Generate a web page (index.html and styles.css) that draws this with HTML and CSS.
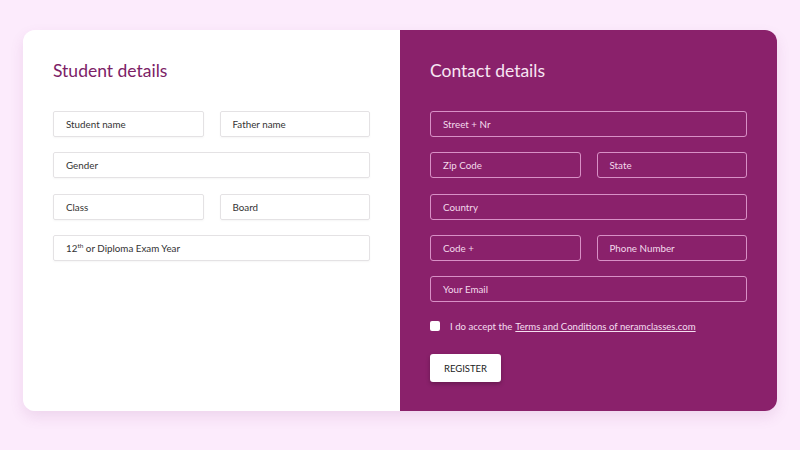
FILE: index.html
```html
<!DOCTYPE html>
<html>
<head>
<meta charset="utf-8">
<link rel="stylesheet" href="styles.css">
</head>
<body>
<div class="card">
  <section class="panel left">
    <h2>Student details</h2>
    <div class="rows">
      <div class="row two">
        <div class="field">Student name</div>
        <div class="field">Father name</div>
      </div>
      <div class="row"><div class="field">Gender</div></div>
      <div class="row two">
        <div class="field">Class</div>
        <div class="field">Board</div>
      </div>
      <div class="row"><div class="field">12<sup>th</sup> or Diploma Exam Year</div></div>
    </div>
  </section>
  <section class="panel right">
    <h2>Contact details</h2>
    <div class="rows">
      <div class="row"><div class="field">Street + Nr</div></div>
      <div class="row two">
        <div class="field">Zip Code</div>
        <div class="field">State</div>
      </div>
      <div class="row"><div class="field">Country</div></div>
      <div class="row two">
        <div class="field">Code +</div>
        <div class="field">Phone Number</div>
      </div>
      <div class="row"><div class="field">Your Email</div></div>
    </div>
    <label class="accept"><span class="box"></span>I do accept the <a href="#">Terms and Conditions of neramclasses.com</a></label>
    <button class="register">REGISTER</button>
  </section>
</div>
</body>
</html>
```
FILE: styles.css
```css
* { box-sizing: border-box; }
html, body { margin: 0; padding: 0; }
body {
  background: #fcebfc;
  font-family: Lato, "Noto Sans", sans-serif;
  width: 800px;
  height: 450px;
  padding: 30px 23px 0 23px;
}
.card {
  display: flex;
  height: 381px;
  border-radius: 12px;
  box-shadow: 0 6px 14px rgba(140, 60, 130, 0.12);
  overflow: hidden;
}
.panel {
  flex: 1;
  padding: 29px 30px 0 30px;
}
.left { background: #ffffff; }
.right { background: #8a216b; }
h2 {
  margin: 0;
  font-weight: 400;
  font-size: 17.5px;
  line-height: 24px;
  height: 52px;
}
.left h2 { color: #7c2166; }
.right h2 { color: #f7e6f3; }
.rows {
  display: flex;
  flex-direction: column;
  gap: 15.3px;
}
.row { display: flex; gap: 16px; }
.row.two .field { flex: 1; }
.field {
  flex: 1;
  height: 26px;
  font-size: 9.8px;
  line-height: 24px;
  padding: 0 12px;
  border-radius: 2px;
}
.left .field {
  border: 1px solid #e4e2e4;
  color: #333333;
  box-shadow: 0 1px 2px rgba(0,0,0,0.04);
}
.right .field {
  border: 1px solid #d890c6;
  color: #f3d9ec;
  border-radius: 3px;
}
sup { font-size: 6.5px; line-height: 0; vertical-align: 4px; }
.accept {
  display: flex;
  align-items: center;
  margin-top: 17px;
  font-size: 9.6px;
  color: #f4dff0;
  height: 14px;
}
.box {
  width: 10px;
  height: 10px;
  background: #ffffff;
  border-radius: 2px;
  margin-right: 10px;
}
.accept a {
  color: #f4dff0;
  text-decoration: underline;
  margin-left: 3px;
}
.register {
  display: block;
  margin-top: 21px;
  width: 71px;
  height: 28px;
  border: none;
  background: #ffffff;
  border-radius: 3px;
  font-family: inherit;
  font-size: 9.5px;
  color: #222222;
  box-shadow: 0 2px 4px rgba(0,0,0,0.25);
  padding: 0;
}
```
